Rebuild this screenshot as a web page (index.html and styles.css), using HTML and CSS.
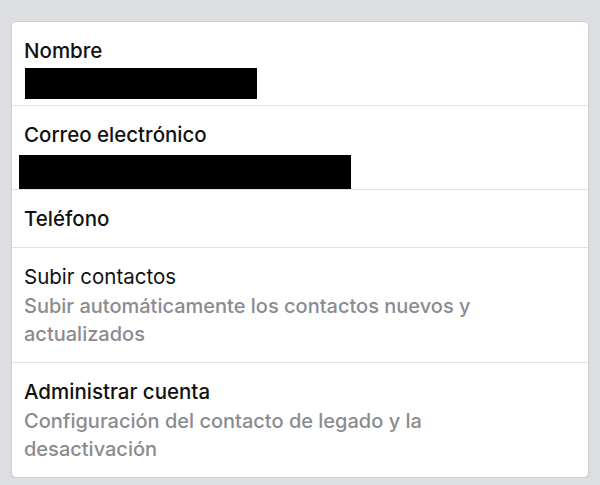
FILE: index.html
```html
<!DOCTYPE html>
<html lang="es">
<head>
    <meta charset="UTF-8">
    <meta name="viewport" content="width=device-width, initial-scale=1.0">
    <title>Cuenta</title>
    <link rel="stylesheet" href="styles.css">
</head>
<body>
    <div class="card">
        <!-- Datos personales -->
        <div class="row row-name">
            <div class="title">Nombre</div>
            <div class="redacted redacted-name"></div>
        </div>
        <div class="row row-mail">
            <div class="title">Correo electrónico</div>
            <div class="redacted redacted-mail"></div>
        </div>
        <div class="row">
            <div class="title">Teléfono</div>
        </div>
        <!-- Opciones -->
        <div class="row">
            <div class="title light">Subir contactos</div>
            <div class="sub">Subir automáticamente los contactos nuevos y actualizados</div>
        </div>
        <div class="row">
            <div class="title">Administrar cuenta</div>
            <div class="sub">Configuración del contacto de legado y la desactivación</div>
        </div>
    </div>
</body>
</html>
```

FILE: styles.css
```css
body {
    margin: 0;
    padding: 21px 11px 0;
    background-color: #dddee2;
    font-family: Inter, "Liberation Sans", Arial, sans-serif;
}

.card {
    background-color: #fff;
    border: 1px solid #cfd0d4;
    border-radius: 5px;
    box-shadow: 0 1px 1px rgba(0, 0, 0, 0.08);
}

.row {
    padding: 15px 40px 14px 12px;
    border-top: 1px solid #e3e3e6;
    font-size: 20.5px;
    line-height: 28px;
}

.row:first-child {
    border-top: none;
}

.title {
    color: #111;
    font-weight: 500;
}

.title.light {
    font-weight: 400;
}

.sub {
    color: #8b8b8f;
    font-size: 20px;
    font-weight: 500;
    margin-top: 1px;
}

/* Bloques tapados */
.redacted {
    background-color: #000;
}

.redacted-name {
    width: 232px;
    height: 31px;
    margin: 3px 0 -8px 1px;
}

.redacted-mail {
    width: 332px;
    height: 34px;
    margin: 6px 0 -14px -5px;
}
```
